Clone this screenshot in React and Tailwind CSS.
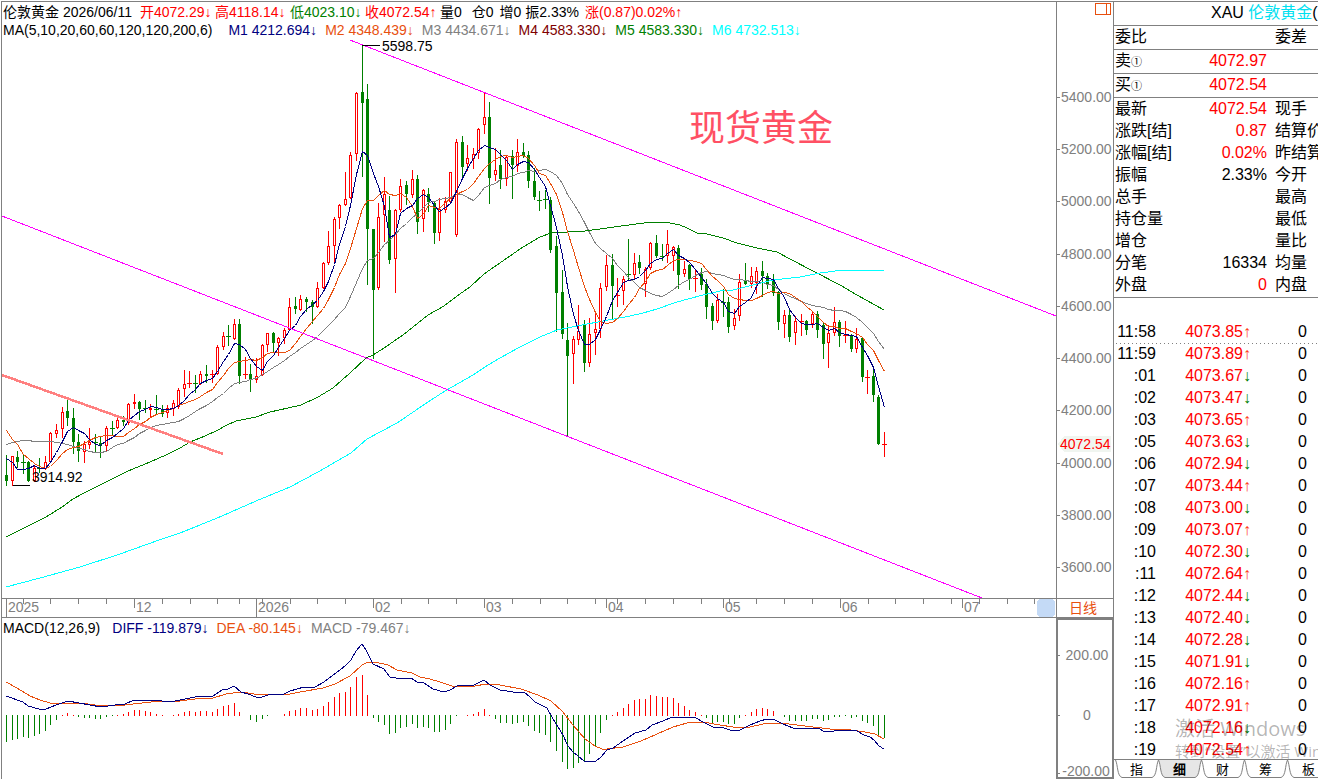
import React from 'react';

const STEP = 5.556;
const barX = i => Math.floor(6.5 + i * STEP) + 0.5;

// one bar each: direction, high, body top, body bottom, low (chart units, downwards)
const BARS = `
g 455 475 480 485|r 456 456 480 485|g 451 457 461 467|g 454 462 462 473|g 461 462 480 481|r 466 468 480 481|g 458 468 468 472|r 456 462 468 469
r 432 433 461 462|r 424 430 433 437|r 407 412 428 437|g 400 411 417 425|g 408 418 441 453|g 434 442 450 461|r 441 444 451 462|r 428 442 444 448
g 434 442 442 452|g 437 443 445 457|r 426 428 445 451|g 421 428 428 434|r 416 420 427 428|g 416 420 421 425|r 403 404 422 424|r 394 402 403 408
g 401 402 408 419|g 400 408 408 412|r 404 408 409 416|g 395 409 409 413|g 405 410 413 416|r 405 408 412 417|r 400 403 408 415|r 388 390 406 408
r 370 384 388 396|r 371 383 383 387|g 375 383 383 392|r 371 374 383 384|g 365 374 375 382|r 370 374 374 382|r 345 347 373 374|r 332 336 346 349
g 325 336 336 345|r 319 324 338 339|g 319 324 375 383|r 357 374 374 378|g 364 374 379 391|r 358 376 379 382|r 344 345 374 375|r 333 333 344 351
g 332 333 342 352|r 337 338 342 355|r 328 330 337 343|r 298 307 329 330|g 297 306 308 313|r 295 299 309 310|g 297 299 301 311|g 300 302 306 323
r 282 288 306 307|r 262 263 287 288|r 231 246 262 264|r 217 219 245 261|r 204 205 217 228|r 172 199 204 205|r 152 155 197 198|r 92 93 153 160
g 45 92 102 176|g 84 99 228 284|g 229 229 289 358|r 203 217 287 289|r 177 194 214 241|g 196 210 259 263|r 209 210 258 292|r 179 186 209 211
g 181 185 193 204|r 170 179 194 197|g 175 179 221 233|r 189 190 218 231|g 188 194 201 211|g 201 203 232 243|r 198 209 232 240|r 197 201 209 212
r 172 172 201 203|r 139 142 234 236|g 136 142 166 179|r 145 158 163 170|r 148 154 158 168|r 128 129 152 158|r 92 117 124 133|g 102 117 177 203
r 148 170 174 180|g 150 165 178 188|r 155 157 178 185|g 150 156 164 198|r 139 152 165 171|g 143 152 155 157|g 151 155 180 187|g 168 181 196 199
g 191 200 200 210|g 190 199 199 208|g 197 200 249 252|g 236 246 292 331|g 270 292 333 338|g 323 340 355 436|r 336 339 353 383|r 305 331 339 344
g 320 324 362 371|r 318 334 362 366|r 311 329 332 354|r 283 288 328 337|r 255 265 286 290|g 254 265 285 318|r 278 295 295 306|r 276 279 290 304
g 239 274 274 280|r 253 263 274 278|g 255 262 267 273|r 267 269 283 296|r 242 243 267 269|g 235 243 255 257|g 244 256 256 260|r 230 244 255 262
r 246 247 255 270|g 245 248 274 288|r 261 269 273 276|g 264 265 278 289|r 269 278 278 291|g 268 274 284 289|g 279 284 306 318|g 303 306 320 329
r 294 300 320 322|g 289 302 302 316|g 297 302 326 332|r 309 318 325 329|r 274 282 315 320|g 263 280 283 284|r 267 276 283 287|r 267 271 282 293
g 261 271 275 296|g 273 276 283 288|g 274 281 292 295|g 291 292 321 329|r 310 315 323 337|g 309 315 336 341|r 316 321 332 344|r 314 321 321 335
g 320 321 329 334|r 311 314 323 327|g 311 314 329 337|g 322 325 343 358|r 325 333 342 367|r 307 322 332 335|g 320 322 335 346|r 321 335 335 342
g 334 335 348 351|r 328 339 348 352|g 337 338 376 381|r 370 377 377 393|g 367 376 394 401|g 395 397 443 444|r 432 444 444 456
`.trim().split(/[|\n]/).map(s => {
    const [dir, ...n] = s.split(' ');
    const [high, top, bottom, low] = n.map(Number);
    return { up: dir === 'r', high, top, bottom, low };
});

const closes = BARS.map(b => (b.up ? b.top : b.bottom));

// lead values cover the bars that come before a full window
function movingAverage(n, lead) {
    return closes.map((_, i) => {
        const y = i < n - 1 ? lead[i] : closes.slice(i - n + 1, i + 1).reduce((a, b) => a + b, 0) / n;
        return `${barX(i)},${Math.round(y) + 0.5}`;
    }).join(' ');
}

const MA5 = movingAverage(5, [458, 462, 469, 469]);
const MA10 = movingAverage(10, [430, 439, 444, 454, 458, 463, 466, 468, 466]);
const MA20 = movingAverage(20, [444, 442, 441, 440, 440, 441, 441, 441, 441, 442, 443, 444, 446, 448, 449, 451, 452, 452, 451]);
const MA60 = '6,537 30,525 46,517 62,507 73,499 84,493 100,485 112,479 128,471 150,462 166,455 180,448 190,442 205,436 218,430 225,426 236,421 256,417 270,412 288,408 301,405 318,397 333,388 350,373 366,358 373,355 384,348 403,335 428,315 444,306 457,296 470,287 484,274 497,265 523,247 540,237 551,233 585,231 600,229 621,226 652,222 665,222 680,225 687,228 697,233 707,234 723,238 737,243 757,248 777,252 790,259 813,271 840,285 857,295 884,310';
const MA200 = '6,587 40,578 80,567 120,554 162,539 180,533 200,525 222,516 256,501 290,487 318,472 351,453 367,439 397,423 428,402 445,391 473,375 485,367 500,358 518,348 540,337 557,330 577,326 603,321 630,316 643,313 657,309 677,302 703,295 720,291 733,290 753,285 773,280 800,277 820,273 843,270 880,270 884,271';

const HIST = [
    -27, -25, -24, -22, -23, -21, -19, -16, -10, -5, 1, 3, 1, -2, -3, -3, -4, -4, -2, -1, 1, 2, 4, 6, 6, 5, 4, 2, 1, 0,
    1, 2, 4, 5, 4, 5, 5, 4, 7, 10, 11, 13, 4, 0, -5, -7, -4, -1, 0, 0, 2, 5, 6, 8, 8, 6, 7, 10, 14, 19,
    23, 24, 29, 39, 41, 21, -3, -7, -10, -19, -18, -13, -12, -9, -13, -12, -13, -17, -17, -15, -9, -1, 0, 1, 2, 4, 7, 1, -4, -8,
    -8, -9, -8, -7, -11, -16, -18, -20, -27, -36, -47, -54, -53, -48, -47, -39, -31, -18, -5, 1, 4, 8, 12, 16, 17, 17, 21, 20, 19, 19,
    18, 13, 10, 6, 4, 1, -3, -8, -7, -7, -9, -9, -3, 1, 4, 7, 8, 7, 5, 0, -2, -6, -6, -6, -6, -4, -4, -6, -5, -2,
    -2, -1, -3, -2, -6, -8, -11, -20, -23,
];
const DIFF = '6,696 23,702 28,706 39,709 46,709 56,705 68,701 79,703 101,707 115,705 125,704 134,700 160,700 162,701 175,701 190,698 201,696 213,696 222,690 228,689 234,686 241,692 248,694 256,697 262,697 268,695 284,694 290,691 304,687 315,687 324,682 345,666 351,660 356,651 362,644 366,650 373,664 384,669 390,677 396,678 411,678 417,682 424,683 433,689 444,692 450,690 457,686 474,685 484,680 490,685 500,690 513,692 524,692 530,697 535,702 547,708 553,719 563,735 568,746 573,752 578,756 584,761 591,762 596,761 601,757 607,750 613,748 623,741 635,733 646,730 652,725 663,721 672,717 696,718 703,722 713,727 724,728 733,731 740,730 750,725 760,721 767,719 775,720 783,724 793,728 820,729 823,731 834,731 846,730 857,731 864,735 870,737 874,740 879,746 884,749';
const DEA = '6,682 17,688 30,696 40,700 50,703 62,704 80,703 95,705 110,705 125,705 133,704 160,701 180,701 195,699 213,698 226,694 240,692 248,693 254,694 290,694 300,692 323,688 335,684 350,676 362,665 368,662 375,662 388,665 397,670 412,673 420,677 430,679 440,682 452,686 475,686 486,684 500,685 521,689 538,695 551,701 562,711 573,725 585,739 595,746 602,749 607,749 623,747 641,741 657,734 673,727 687,723 703,722 720,725 733,727 750,727 763,724 780,723 797,725 813,727 830,729 851,730 865,732 875,734 884,739';

const DATE_TICKS = [
    23, 50, 78, 106, 162, 190, 217, 239, 262, 290, 317, 345, 401, 428, 456, 512, 540, 567, 595, 617, 645, 673, 701,
    729, 756, 784, 812, 868, 895, 923, 951, 979, 1007, 1034,
];
const DATES = [
    { x: 6, label: '2025', year: true },
    { x: 134, label: '12' },
    { x: 256, label: '2026', year: true },
    { x: 373, label: '02' },
    { x: 484, label: '03' },
    { x: 606, label: '04' },
    { x: 723, label: '05' },
    { x: 840, label: '06' },
    { x: 962, label: '07' },
];
const PRICES = [
    [97, '5400.00'], [149, '5200.00'], [201, '5000.00'], [254, '4800.00'], [306, '4600.00'],
    [358, '4400.00'], [410, '4200.00'], [463, '4000.00'], [515, '3800.00'], [567, '3600.00'],
];

const OHLC = [
    ['开', '4072.29↓', 'text-[#ff0000]'],
    ['高', '4118.14↓', 'text-[#ff0000]'],
    ['低', '4023.10↓', 'text-[#008000]'],
    ['收', '4072.54↑', 'text-[#ff0000]'],
];
const AVERAGES = [
    ['M1 4212.694↓', 'text-[#000080]'],
    ['M2 4348.439↓', 'text-[#e8500f]'],
    ['M3 4434.671↓', 'text-[#808080]'],
    ['M4 4583.330↓', 'text-[#800000]'],
    ['M5 4583.330↓', 'text-[#008000]'],
    ['M6 4732.513↓', 'text-[#00ffff]'],
];

const QUOTES = [
    ['最新', '4072.54', '现手', true],
    ['涨跌[结]', '0.87', '结算价', true],
    ['涨幅[结]', '0.02%', '昨结算', true],
    ['振幅', '2.33%', '今开', false],
    ['总手', '', '最高', false],
    ['持仓量', '', '最低', false],
    ['增仓', '', '量比', false],
    ['分笔', '16334', '均量', false],
    ['外盘', '0', '内盘', true],
];

const TRADES = [
    ['11:58', '4073.85', 1], ['11:59', '4073.89', 1], [':01', '4073.67', 0], [':02', '4073.47', 0], [':03', '4073.65', 1],
    [':05', '4073.63', 0], [':06', '4072.94', 0], [':07', '4073.44', 1], [':08', '4073.00', 0], [':09', '4073.07', 1],
    [':10', '4072.30', 0], [':11', '4072.64', 1], [':12', '4072.44', 0], [':13', '4072.40', 0], [':14', '4072.28', 0],
    [':15', '4071.91', 0], [':16', '4072.16', 1], [':17', '4072.91', 1], [':18', '4072.16', 0], [':19', '4072.54', 1],
];

const percent = x => `${((x - 2) / 1054) * 100}%`;

function Line({ points, color }) {
    return <polyline points={points} fill="none" stroke={color} strokeWidth="1" vectorEffect="non-scaling-stroke" />;
}

function Candle({ bar, x }) {
    const color = bar.up ? '#ff0000' : '#008000';
    const flat = bar.top === bar.bottom;
    return (
        <g>
            <rect x={x - 0.5} y={bar.high} width="1" height={bar.low - bar.high + 1} fill={color} />
            {flat && <rect x={x - 2.5} y={bar.top} width="5" height="1" fill={color} />}
            {!flat && !bar.up && <rect x={x - 1.5} y={bar.top} width="3" height={bar.bottom - bar.top + 1} fill={color} />}
            {!flat && bar.up && <rect x={x - 1} y={bar.top + 0.5} width="2" height={bar.bottom - bar.top} fill="#fff" stroke={color} />}
        </g>
    );
}

function PricePanel() {
    return (
        <div className="flex">
            <div className="min-w-0 flex-1">
                <div className="h-[38px] overflow-hidden whitespace-nowrap pt-px pl-px text-sm leading-[18px]">
                    <div className="flex">
                        <span className="mr-2">伦敦黄金 2026/06/11</span>
                        {OHLC.map(([name, value, color]) => (
                            <span key={name} className={`w-[75px] ${color}`}>{name}{value}</span>
                        ))}
                        <span className="mr-2.5">量0</span>
                        <span className="mr-1.5">仓0</span>
                        <span className="mr-1">增0</span>
                        <span className="mr-1.5">振2.33%</span>
                        <span className="text-[#ff0000]">涨(0.87)0.02%↑</span>
                    </div>
                    <div className="flex gap-2">
                        <span className="mr-2">MA(5,10,20,60,60,120,120,200,6)</span>
                        {AVERAGES.map(([text, color]) => <span key={text} className={color}>{text}</span>)}
                    </div>
                </div>
                <div className="relative">
                    <svg className="block h-[558px] w-full" viewBox="2 40 1054 558" preserveAspectRatio="none" shapeRendering="crispEdges">
                        {BARS.map((bar, i) => <Candle key={i} bar={bar} x={barX(i)} />)}
                        <Line points={MA20} color="#808080" />
                        <Line points={MA60} color="#008000" />
                        <Line points={MA200} color="#00ffff" />
                        <Line points={MA10} color="#e8500f" />
                        <Line points={MA5} color="#000080" />
                        <Line points="350,40 1056,316" color="#ff00ff" />
                        <Line points="2,216 982,598" color="#ff00ff" />
                        <path d="M2 375L223 454" stroke="#ff8080" strokeWidth="2.5" />
                        <path d="M362 45.5H380M13 485.5H30" stroke="#000" />
                    </svg>
                    <span className="absolute top-[-2px] text-sm leading-4" style={{ left: percent(382) }}>5598.75</span>
                    <span className="absolute top-[429px] text-sm leading-4" style={{ left: percent(32) }}>3914.92</span>
                    <span className="absolute top-[69px] text-4xl leading-10 text-[#ff5064]" style={{ left: percent(689) }}>现货黄金</span>
                </div>
            </div>
            <div className="w-[57px] border-l border-[#808080]">
                <svg className="block h-[596px] w-14" viewBox="1057 2 56 596" shapeRendering="crispEdges" fontSize="14">
                    <path d="M1095.5 3.5H1110.5V14.5H1095.5ZM1106.5 3.5V14.5" fill="none" stroke="#e8500f" />
                    {PRICES.map(([y, label]) => (
                        <g key={label}>
                            <path d={`M1057 ${y + 0.5}H1060`} stroke="#808080" />
                            <text x="1061" y={y + 5} fill="#808080">{label}</text>
                        </g>
                    ))}
                    <path d="M1058 444L1064 436H1111V452H1064Z" fill="#f0f5f0" />
                    <text x="1060" y="449" fill="#ff0000">4072.54</text>
                </svg>
            </div>
        </div>
    );
}

function DateAxis() {
    return (
        <div className="flex h-5 border-y border-[#808080] text-sm leading-4">
            <div className="relative min-w-0 flex-1 overflow-hidden text-[#808080]">
                <svg className="block h-[18px] w-full" viewBox="2 599 1054 18" preserveAspectRatio="none" shapeRendering="crispEdges">
                    <rect x="1037" y="599" width="18" height="18" rx="4" fill="#c4daf6" />
                    {DATE_TICKS.map(x => <path key={x} d={`M${x + 0.5} 599V604`} stroke="#808080" />)}
                    {DATES.map(d => <path key={d.x} d={`M${d.x + 0.5} 599V${d.year ? 617 : 608}`} stroke="#808080" />)}
                </svg>
                {DATES.map(d => (
                    <span key={d.x} className="absolute top-0" style={{ left: percent(d.x + 2) }}>{d.label}</span>
                ))}
            </div>
            <button className="w-[57px] border-l border-[#808080] pr-1 text-[#e8500f]">日线</button>
        </div>
    );
}

function MacdPanel() {
    return (
        <div className="flex flex-1">
            <div className="min-w-0 flex-1">
                <div className="flex h-[22px] gap-2 overflow-hidden whitespace-nowrap pl-px text-sm leading-5">
                    <span className="mr-1">MACD(12,26,9)</span>
                    <span className="text-[#000080]">DIFF -119.879↓</span>
                    <span className="text-[#e8500f]">DEA -80.145↓</span>
                    <span className="text-[#808080]">MACD -79.467↓</span>
                </div>
                <svg className="block h-[139px] w-full" viewBox="2 640 1054 139" preserveAspectRatio="none" shapeRendering="crispEdges">
                    {HIST.map((v, i) => v !== 0 && (
                        <rect key={i} x={barX(i) - 0.5} y={v > 0 ? 716 - v : 715} width="1" height={Math.abs(v)} fill={v > 0 ? '#ff0000' : '#008000'} />
                    ))}
                    <Line points={DEA} color="#e8500f" />
                    <Line points={DIFF} color="#000080" />
                </svg>
            </div>
            <div className="w-[57px] border-2 border-r border-[#808080]">
                <svg className="block h-[157px] w-[54px]" viewBox="1058 620 54 157" shapeRendering="crispEdges" fontSize="14" fill="#808080" textAnchor="middle">
                    <path d="M1058 655.5H1060M1058 715.5H1060M1058 773.5H1060" stroke="#808080" />
                    <text x="1087" y="660">200.00</text>
                    <text x="1087" y="720">0</text>
                    <text x="1086" y="776">-200.00</text>
                </svg>
            </div>
        </div>
    );
}

function Tab({ label, active }) {
    return (
        <button className={`relative h-[19px] w-[43px] shrink-0 text-[13px] leading-[19px] ${active ? 'font-bold' : ''}`}>
            <svg className="absolute inset-0 h-[19px] w-[43px] overflow-visible" viewBox="0 0 43 19">
                <path d="M0.5 0C3 5 2 16 7 17.5H37C42 16 41 5 43.5 0" fill={active ? '#e6e6e6' : '#fff'} stroke="#808080" />
            </svg>
            <span className="relative">{label}</span>
        </button>
    );
}

function Sidebar() {
    return (
        <aside className="relative flex w-[205px] flex-col overflow-hidden whitespace-nowrap border-t border-l border-[#808080] text-base leading-[22px]">
            <h1 className="h-6 border-b border-[#808080] pl-[97px]">
                XAU <span className="text-[#00e0f0]">伦敦黄金</span>(
            </h1>
            <div className="flex h-6 border-b border-[#808080] pl-px">
                <span className="w-40">委比</span>
                <span>委差</span>
            </div>
            <div className="flex h-6 justify-between border-b border-[#808080] pr-[51px] pl-px">
                <span>卖<small className="text-[11px]">①</small></span>
                <span className="text-[#ff0000]">4072.97</span>
            </div>
            <div className="flex h-6 justify-between border-b border-[#808080] pr-[51px] pl-px">
                <span>买<small className="text-[11px]">①</small></span>
                <span className="text-[#ff0000]">4072.54</span>
            </div>
            <div className="border-b border-[#808080] pb-px">
                <table className="w-[212px] table-fixed">
                    <tbody>
                        {QUOTES.map(([name, value, next, red]) => (
                            <tr key={name} className="h-[22px]">
                                <th className="w-[70px] p-0 pl-px text-left font-normal">{name}</th>
                                <td className={`w-[83px] p-0 text-right ${red ? 'text-[#ff0000]' : ''}`}>{value}</td>
                                <th className="p-0 pl-2 text-left font-normal">{next}</th>
                            </tr>
                        ))}
                    </tbody>
                </table>
            </div>
            <table className="mt-[23px] ml-0.5 w-[202px] table-fixed">
                <tbody>
                    {TRADES.map(([time, price, up], i) => (
                        <tr key={time} className={i === 1 ? 'h-[22px] bg-[repeating-linear-gradient(to_right,#808080_0_1px,transparent_1px_4px)] bg-[length:100%_1px] bg-top bg-no-repeat' : 'h-[22px]'}>
                            <td className="w-10 p-0 text-right">{time}</td>
                            <td className={`w-[95px] p-0 text-right ${up ? 'text-[#ff4020]' : 'text-[#008000]'}`}>
                                <span className="text-[#ff0000]">{price}</span>{up ? '↑' : '↓'}
                            </td>
                            <td className="p-0 pr-[11px] text-right">0</td>
                        </tr>
                    ))}
                </tbody>
            </table>
            <nav className="-mt-0.5 flex h-5 border-t border-[#808080] pl-px">
                <Tab label="指" />
                <Tab label="细" active />
                <Tab label="财" />
                <Tab label="筹" />
                <Tab label="板" />
            </nav>
            <div className="pointer-events-none absolute bottom-[18px] left-[61px] font-['Open_Sans','Noto_Sans_CJK_SC',sans-serif] text-black/30">
                <p className="text-xl leading-6">激活 Windows</p>
                <p className="text-[15px] leading-5">转到“设置”以激活 Windows。</p>
            </div>
        </aside>
    );
}

export default function App() {
    return (
        <div className="flex min-h-screen bg-white pt-px pl-px font-['Liberation_Sans','Noto_Sans_CJK_SC',sans-serif] text-black">
            <main className="flex min-w-0 flex-1 flex-col border-t border-l border-[#808080]">
                <PricePanel />
                <DateAxis />
                <MacdPanel />
            </main>
            <Sidebar />
        </div>
    );
}
